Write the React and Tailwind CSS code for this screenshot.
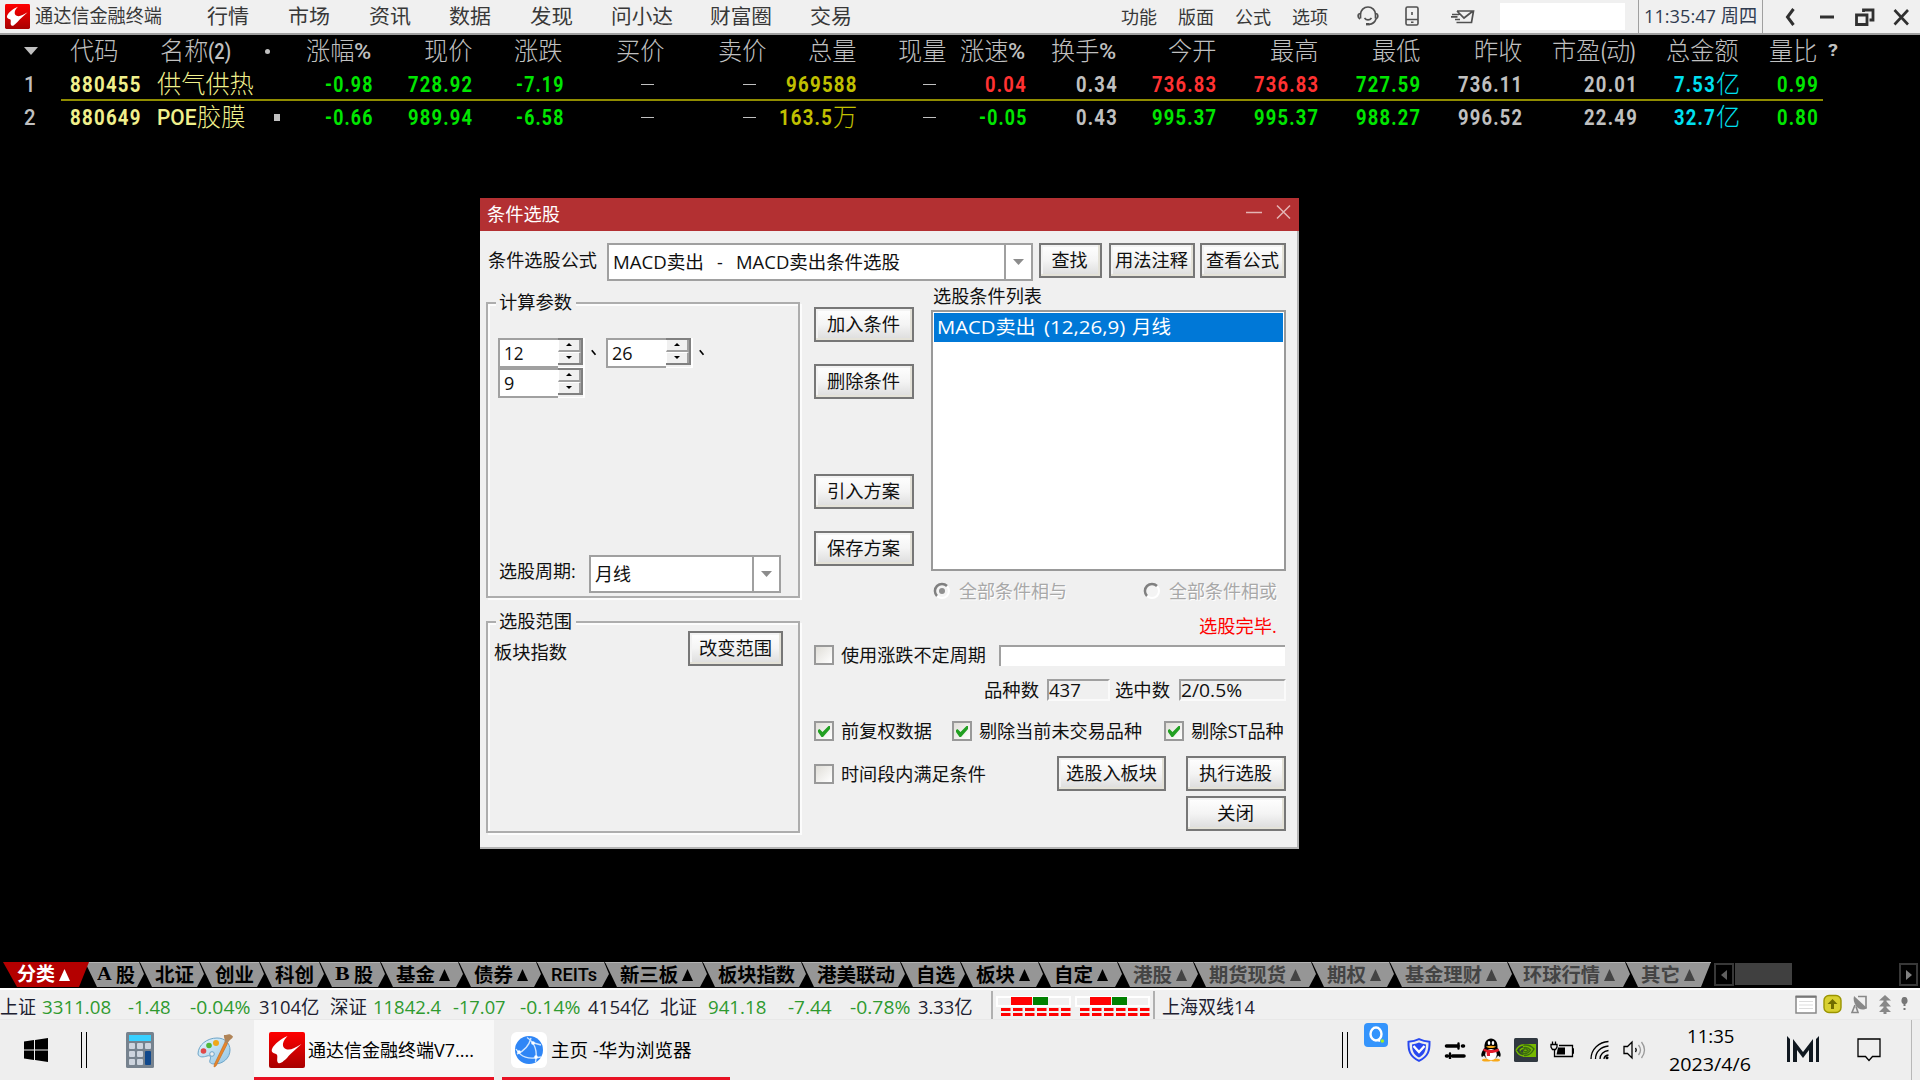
import React, { useLayoutEffect, useRef, useState } from "react";

/* A run of text set to an exact width */
function T({ w, className = "", children }) {
  const ref = useRef(null);
  const [scale, setScale] = useState(1);
  useLayoutEffect(() => {
    const n = ref.current.offsetWidth;
    if (n) setScale(w / n);
  }, [w, children]);
  return (
    <span className={"inline-block shrink-0 whitespace-pre " + className} style={{ width: w }}>
      <span ref={ref} className="inline-block origin-left" style={{ transform: `scaleX(${scale})` }}>
        {children}
      </span>
    </span>
  );
}

const Logo = ({ className }) => (
  <svg viewBox="0 0 36 36" className={className}>
    <defs>
      <linearGradient id="lg" x1="0" y1="0" x2="0" y2="1">
        <stop offset="0" stopColor="#ff0000" />
        <stop offset="1" stopColor="#a80000" />
      </linearGradient>
    </defs>
    <rect width="36" height="36" rx="2" fill="url(#lg)" />
    <path d="M18.500 4C13 6 5 12 3 17c-1 3 1 4 4 5 2.500 1 .5 5 1.500 8 1 2.500 4 1 6-1 3-2 4-4 7-7L32.500 12C27 15.500 23 17.500 19.500 17.500c-4 0-6-2.500-5.500-6 .5-3 2.500-5 4.500-7.500z" fill="#fff" />
  </svg>
);

/* ---------- top bar ---------- */
function TopBar() {
  return (
    <header className="flex h-[35px] w-full items-center overflow-hidden border-b-2 border-[#a0a0a0] bg-[#f0f0f0] text-[20px] leading-none text-[#383838]">
      <Logo className="ml-[5px] h-[25px] w-[25px] shrink-0" />
      <T w={127} className="ml-[5px] text-[19px]">通达信金融终端</T>
      <T w={42} className="ml-[45px]">行情</T>
      <T w={42} className="ml-[39px]">市场</T>
      <T w={42} className="ml-[39px]">资讯</T>
      <T w={42} className="ml-[38px]">数据</T>
      <T w={43} className="ml-[39px]">发现</T>
      <T w={62} className="ml-[38px]">问小达</T>
      <T w={62} className="ml-[37px]">财富圈</T>
      <T w={42} className="ml-[38px]">交易</T>
      <T w={36} className="ml-[269px] text-[18px]">功能</T>
      <T w={36} className="ml-[21px] text-[18px]">版面</T>
      <T w={36} className="ml-[21px] text-[18px]">公式</T>
      <T w={36} className="ml-[21px] text-[18px]">选项</T>
      <svg viewBox="0 0 22 20" className="-mt-[2px] ml-[29px] h-5 w-[22px] shrink-0" fill="none" stroke="#505050" strokeWidth="1.7">
        <path d="M3.500 12.500V8.500A7.500 7.500 0 0 1 18.500 8.500V12.500" />
        <path d="M3 7.500C.5 8 .5 12 3 13M19 7.500c2.500.5 2.500 4.500 0 5.500-1 3-3.500 5-7 5.500M7.500 12c2 2.500 5 2.500 7 0" />
        <path d="M9 18.200h3.500" strokeWidth="2.400" />
      </svg>
      <svg viewBox="0 0 14 20" className="-mt-[2px] ml-[26px] h-5 w-[14px] shrink-0" fill="none" stroke="#505050" strokeWidth="1.600">
        <rect x="1" y="1" width="12" height="18" rx="1.500" />
        <path d="M1 13.500h12M6 16.300h2.500M7 6v3" />
      </svg>
      <svg viewBox="0 0 24 15" className="-mt-[1px] ml-[32px] h-[15px] w-6 shrink-0" fill="none" stroke="#505050" strokeWidth="1.700">
        <path d="M6 2H22.500L20.500 13.500H5.500M6 2l7 7L22 2M1 5.500h7M0 7.800h6.500M4 10.500h5" />
      </svg>
      <div className="ml-[25px] h-[27px] w-[125px] shrink-0 bg-white" />
      <div className="ml-[13px] h-full w-px shrink-0 bg-[#a0a0a0]" />
      <T w={113} className="ml-[5px] text-[19px] text-[#303c50]">11:35:47 周四</T>
      <div className="ml-[5px] h-full w-px shrink-0 bg-[#a0a0a0]" />
      <svg viewBox="0 0 130 20" className="ml-[20px] h-5 w-[130px] shrink-0" fill="none" stroke="#303030" strokeWidth="3">
        <path d="M10.500 2L4.500 10l6 8M37 10h14" />
        <path d="M80.500 5V3H90v10h-3.500M73.500 8H84v9.500H73.500z" strokeWidth="2.800" />
        <path d="M111.500 3l13.500 14.500M125 3l-13.500 14.500" strokeWidth="2.600" />
      </svg>
    </header>
  );
}

/* ---------- quote table ---------- */
const isCjk = (c) => c.charCodeAt(0) > 0x2e80;
function Quote({ text, className = "" }) {
  const parts = text.match(/[\u2e80-\uffff]+|[^\u2e80-\uffff]+/g) || [];
  const unit = (c) => (isCjk(c) ? 24.2 : c === "." ? 5.7 : c === "-" ? 6.5 : c === "%" ? 17 : "()".includes(c) ? 5.6 : /[A-Z]/.test(c) ? 13.3 : 12);
  return (
    <span className={"inline-flex items-center " + className}>
      {parts.map((p, i) => {
        const w = [...p].reduce((a, c) => a + unit(c), 0);
        const cjk = isCjk(p[0]);
        return (
          <T key={i} w={w} className={cjk ? "mb-[2px] text-[25px] font-light" : /[A-Z()%]/.test(p) ? "font-[Roboto] text-[22px] font-medium" : "font-[Roboto] text-[22px] font-bold tracking-[1.5px]"}>
            {p}
          </T>
        );
      })}
    </span>
  );
}

const heads = ["涨幅%", "现价", "涨跌", "买价", "卖价", "总量", "现量", "涨速%", "换手%", "今开", "最高", "最低", "昨收", "市盈(动)", "总金额", "量比"];
const rows = [
  { n: "1", code: "880455", name: "供气供热", v: ["-0.98", "728.92", "-7.19", "–", "–", "969588", "–", "0.04", "0.34", "736.83", "736.83", "727.59", "736.11", "20.01", "7.53亿", "0.99"], c: "gggwwywrwrrgwwcg" },
  { n: "2", code: "880649", name: "POE胶膜", v: ["-0.66", "989.94", "-6.58", "–", "–", "163.5万", "–", "-0.05", "0.43", "995.37", "995.37", "988.27", "996.52", "22.49", "32.7亿", "0.80"], c: "gggwwywgwgggwwcg" },
];
const tone = { g: "text-[#00e600]", r: "text-[#ff3232]", w: "text-[#c0c0c0]", y: "text-[#c0c000]", c: "text-[#00e0f0]" };
const gridCls =
  "grid w-[1920px] items-center leading-none text-[#c0c0c0] grid-cols-[61px_97px_132px_83px_101px_90px_102px_102px_90px_90px_79px_91px_100px_102px_102px_102px_114px_103px_78px_1fr]";

function Table() {
  return (
    <section className="shrink-0 bg-black">
      <div className={gridCls + " h-[33px]"}>
        <svg viewBox="0 0 14 8" className="mb-[2px] ml-[24px] h-2 w-[14px]"><path d="M0 0h14L7 8z" fill="#c0c0c0" /></svg>
        <Quote text="代码" className="ml-[9px]" />
        <div className="flex items-center">
          <Quote text="名称(2)" className="ml-[2px]" />
          <i className="ml-[33px] h-[5px] w-[5px] rounded-full bg-[#c0c0c0]" />
        </div>
        {heads.map((h, i) => (
          <Quote key={i} text={h} className="mr-[2px] justify-self-end" />
        ))}
        <T w={10} className="ml-[9px] mb-[2px] font-[Roboto] text-[16px] font-bold">?</T>
      </div>
      {rows.map((r, ri) => (
        <div key={r.n} className={gridCls + " relative h-[33px]"}>
          <T w={12} className="ml-[24px] font-[Roboto] text-[22px] font-medium">{r.n}</T>
          <Quote text={r.code} className="ml-[9px] text-[#f0f08c]" />
          <div className="flex items-center text-[#f0f08c]">
            <Quote text={r.name} className="-ml-px" />
            {ri === 1 && <i className="ml-[29px] h-[7px] w-[6px] bg-[#c0c0c0]" />}
          </div>
          {r.v.map((v, i) =>
            v === "–" ? (
              <i key={i} className="mr-[12px] h-px w-[13px] justify-self-end bg-[#c0c0c0]" />
            ) : (
              <Quote key={i} text={v} className={(isCjk(v.slice(-1)) ? "mr-[1px] " : "") + "justify-self-end " + tone[r.c[i]]} />
            )
          )}
          {ri === 0 && <div className="absolute bottom-0 left-[61px] h-[2px] w-[1762px] bg-[#908c00]" />}
        </div>
      ))}
    </section>
  );
}

/* ---------- dialog ---------- */
function Btn({ w, tw, children, className = "" }) {
  return (
    <button
      className={"flex h-[35px] shrink-0 items-center justify-center border-2 border-[#777] bg-linear-to-b from-white via-[#f4f4f4] to-[#dcdcdc] pr-[2px] pb-[1px] leading-none shadow-[inset_-2px_-2px_0_#e4e2d8,inset_2px_2px_0_#f3f3f3] " + className}
      style={{ width: w }}
    >
      <T w={tw}>{children}</T>
    </button>
  );
}
function Spin({ v, w }) {
  return (
    <div className="flex h-[30px] w-[87px] shrink-0 border-r-2 border-b border-white bg-[#f0f0f0]">
      <div className="flex h-[30px] w-[60px] items-center border-2 border-r-0 border-[#a0a0a0] bg-white pl-[4px]">
        <T w={w}>{v}</T>
      </div>
      <div className="flex h-[27px] w-[25px] flex-col border-t-2 border-r-2 border-b-2 border-[#808080]">
        <div className="flex h-1/2 items-center justify-center border-r-2 border-b-2 border-[#a0a0a0] border-l border-l-white bg-[#f0f0f0]">
          <svg viewBox="0 0 6 3" className="h-[3px] w-[6px]"><path d="M3 0l3 3H0z" /></svg>
        </div>
        <div className="flex h-1/2 items-center justify-center border-t border-r-2 border-l border-white border-r-[#a0a0a0] bg-[#f0f0f0]">
          <svg viewBox="0 0 6 3" className="h-[3px] w-[6px]"><path d="M0 0h6L3 3z" /></svg>
        </div>
      </div>
    </div>
  );
}
const Tick = () => (
  <svg viewBox="0 0 8 8" className="h-[7px] w-[6px]"><path d="M1 1l5 6" stroke="#000" fill="none" strokeWidth="2.200" /></svg>
);
function Combo({ w, children, className = "" }) {
  return (
    <div className={"flex h-[38px] shrink-0 items-center border-2 border-[#a0a0a0] bg-white pl-[4px] " + className} style={{ width: w }}>
      {children}
      <div className="ml-auto flex h-full w-[27px] items-center justify-center border-l-2 border-[#a0a0a0]">
        <svg viewBox="0 0 11 6" className="h-[6px] w-[11px]"><path d="M0 0h11L5.500 6z" fill="#8c8c8c" /></svg>
      </div>
    </div>
  );
}
function Check({ on, w, children, className = "" }) {
  return (
    <label className={"flex shrink-0 items-center " + className}>
      <span className="flex h-5 w-5 items-center justify-center border-2 border-[#999] bg-linear-to-br from-[#e0ded8] to-white">
        {on && (
          <svg viewBox="0 0 12 11" className="h-[11px] w-3"><path d="M0 4l1.500-1 3 3L10.500 0H12v3L5 11H3.500L0 6z" fill="#22a022" /></svg>
        )}
      </span>
      <T w={w} className="mr-px ml-[7px]">{children}</T>
    </label>
  );
}
function Group({ title, className, children }) {
  return (
    <fieldset className={"relative w-[314px] shrink-0 border-2 border-[#adadad] shadow-[2px_2px_0_#fcfcfc,inset_2px_2px_0_#fcfcfc] " + className}>
      <div className="absolute -top-[11px] left-[8px] bg-[#f0f0f0] pr-[4px] pl-[3px] leading-none">
        <T w={73}>{title}</T>
      </div>
      {children}
    </fieldset>
  );
}
function Radio({ on, className, children }) {
  return (
    <label className={"flex items-center text-[#a8a8a8] [text-shadow:1px_1px_0_#fff] " + className}>
      <svg viewBox="0 0 18 18" className="h-[18px] w-[18px]" fill="none">
        <circle cx="9" cy="9" r="7" fill="#f4f4f4" stroke="#fff" strokeWidth="2" />
        <path d="M4 14A7 7 0 0 1 14 4" stroke="#808080" strokeWidth="2.500" />
        {on && <circle cx="9" cy="9" r="3" fill="#909090" />}
      </svg>
      <T w={108} className="ml-[8px]">{children}</T>
    </label>
  );
}

function Dialog() {
  return (
    <div className="absolute top-[198px] left-[480px] h-[651px] w-[819px] border-r-2 border-b-2 border-[#b4b4b4] bg-[#f0f0f0] text-[18px] leading-none text-[#101010]">
      <div className="flex h-[33px] w-[819px] items-center bg-[#b33032] text-white">
        <T w={73} className="-mt-[2px] ml-[7px]">条件选股</T>
        <svg viewBox="0 0 46 16" className="mt-[-5px] mr-[7px] ml-auto h-4 w-[46px]" fill="none" stroke="#e4b4b4" strokeWidth="1.500">
          <path d="M0 8.500h16M31 1.500l13 13M44 1.500l-13 13" />
        </svg>
      </div>
      <div className="flex h-[62px] items-start pt-[12px] pl-[8px]">
        <T w={109} className="mt-[8px]">条件选股公式</T>
        <Combo w={426} className="ml-[10px]">
          <T w={91}>MACD卖出</T>
          <T w={6} className="ml-[13px]">-</T>
          <T w={164} className="ml-[13px]">MACD卖出条件选股</T>
        </Combo>
        <Btn w={63} tw={36} className="ml-[6px]">查找</Btn>
        <Btn w={86} tw={73} className="ml-[7px]">用法注释</Btn>
        <Btn w={86} tw={73} className="ml-[5px]">查看公式</Btn>
      </div>
      <div className="flex">
        <div className="w-[334px] pl-[6px]">
          <Group title="计算参数" className="mt-[9px] h-[296px]">
            <div className="flex w-[260px] flex-wrap pt-[34px] pl-[10px]">
              <Spin v="12" w={20} />
              <span className="mt-[11px] mr-[9px] ml-[6px] w-[6px]"><Tick /></span>
              <Spin v="26" w={21} />
              <span className="mt-[11px] ml-[6px] w-[6px]"><Tick /></span>
              <Spin v="9" w={10} />
            </div>
            <div className="mt-[157px] flex h-[38px] items-center pl-[11px]">
              <T w={77} className="-mt-[7px]">选股周期:</T>
              <Combo w={192} className="ml-[13px]"><T w={36}>月线</T></Combo>
            </div>
          </Group>
          <Group title="选股范围" className="mt-[23px] h-[212px]">
            <div className="flex items-start justify-between pt-[8px] pr-[15px] pl-[6px]">
              <T w={73} className="mt-[12px]">板块指数</T>
              <Btn w={95} tw={73}>改变范围</Btn>
            </div>
          </Group>
        </div>
        <div className="w-[472px]">
          <div className="flex h-[340px]">
            <div className="w-[100px] pt-[14px]">
              <Btn w={100} tw={73}>加入条件</Btn>
              <Btn w={100} tw={73} className="mt-[22px]">删除条件</Btn>
              <Btn w={100} tw={73} className="mt-[75px]">引入方案</Btn>
              <Btn w={100} tw={73} className="mt-[22px]">保存方案</Btn>
            </div>
            <div className="-mt-[6px] ml-[17px] w-[355px]">
              <T w={109} className="mt-[-5px] ml-[2px]">选股条件列表</T>
              <div className="mt-[5px] h-[261px] border-2 border-[#999] bg-white p-[1px]">
                <div className="flex h-[29px] items-center bg-[#0078d7] pl-[3px] text-[19px] text-white">
                  <T w={99}>MACD卖出</T>
                  <T w={81} className="ml-[8px]">(12,26,9)</T>
                  <T w={39} className="ml-[7px]">月线</T>
                </div>
              </div>
              <div className="mt-[11px] flex">
                <Radio on className="ml-[2px]">全部条件相与</Radio>
                <Radio className="ml-[76px]">全部条件相或</Radio>
              </div>
            </div>
          </div>
          <div className="-mt-[16px] flex h-[18px] justify-end pr-[9px]"><T w={78} className="text-[#ff0000]">选股完毕.</T></div>
          <div className="mt-[9px] flex h-[22px] items-center">
            <Check w={145}>使用涨跌不定周期</Check>
            <div className="ml-[12px] h-[21px] w-[286px] border-t-2 border-l-2 border-[#a0a0a0] bg-white" />
          </div>
          <div className="mt-[13px] flex h-[22px] items-center justify-end">
            <T w={55}>品种数</T>
            <div className="ml-[8px] h-[22px] w-[63px] border-2 border-[#fafafa] border-t-[#a0a0a0] border-l-[#a0a0a0] leading-[18px]"><T w={32}>437</T></div>
            <T w={55} className="ml-[5px]">选中数</T>
            <div className="ml-[9px] h-[22px] w-[107px] border-2 border-[#fafafa] border-t-[#a0a0a0] border-l-[#a0a0a0] leading-[18px]"><T w={61}>2/0.5%</T></div>
          </div>
          <div className="mt-[19px] flex h-[22px] items-center">
            <Check on w={91}>前复权数据</Check>
            <Check on w={163} className="ml-[19px]">剔除当前未交易品种</Check>
            <Check on w={93} className="ml-[21px]">剔除ST品种</Check>
          </div>
          <div className="mt-[14px] flex h-[35px] items-center">
            <Check w={145}>时间段内满足条件</Check>
            <Btn w={109} tw={91} className="ml-[70px]">选股入板块</Btn>
            <Btn w={100} tw={73} className="ml-[20px]">执行选股</Btn>
          </div>
          <div className="mt-[5px] flex justify-end"><Btn w={100} tw={37}>关闭</Btn></div>
        </div>
      </div>
    </div>
  );
}

/* ---------- category tabs ---------- */
const tabs = [
  ["A 股", 55, 38], ["北证", 60, 39], ["创业", 60, 39], ["科创", 60, 39], ["B 股", 61, 37],
  ["基金", 78, 39, 1], ["债券", 78, 39, 1], ["REITs", 68, 46], ["新三板", 98, 58, 1], ["板块指数", 99, 77],
  ["港美联动", 99, 78], ["自选", 60, 39], ["板块", 78, 39, 1], ["自定", 79, 39, 1], ["港股", 76, 39, 1, 1],
  ["期货现货", 118, 77, 1, 1], ["期权", 78, 39, 1, 1], ["基金理财", 118, 77, 1, 1], ["环球行情", 118, 77, 1, 1], ["其它", 80, 39, 1, 1],
];
const Up = ({ className = "" }) => (
  <svg viewBox="0 0 11 12" className={"ml-[4px] h-3 w-[11px] shrink-0 " + className}><path d="M5.500 0L11 12H0z" fill="currentColor" /></svg>
);
function Tabs() {
  return (
    <nav className="flex h-[26px] items-start bg-black text-[19px] leading-none font-bold">
      <div className="relative z-10 ml-[3px] flex h-[25px] w-[86px] shrink-0 items-center bg-[#b40000] pl-[14px] text-white [clip-path:polygon(0_0,100%_0,76px_100%,14px_100%)]">
        <T w={38}>分类</T><Up />
      </div>
      <div className="-ml-[5px] flex">
        {tabs.map(([t, w, tw, up, dim], i) => (
          <div key={t} className="relative h-[25px] shrink-0" style={{ width: w }}>
            <div
              className="flex h-[25px] w-[calc(100%+6px)] items-center border-t border-[#b4b4b4] bg-[#969696]"
              style={{ clipPath: i === tabs.length - 1 ? "polygon(1px 0,100% 0,calc(100% - 10px) 100%,13px 100%)" : "polygon(1px 0,calc(100% - 6px) 0,calc(100% - 1px) 48%,calc(100% - 8px) 100%,13px 100%)" }}
            >
              <span className={"flex items-center " + (i === 0 ? "ml-[13px] " : "ml-[16px] ") + (dim ? "text-[#444]" : "text-black")}>
                {/^[AB]/.test(t) ? (
                  <><T w={15} className="-mt-[3px] font-['Liberation_Serif']">{t[0]}</T><T w={19} className="ml-[4px]">股</T></>
                ) : (
                  <T w={tw} className={t === "REITs" ? "-mt-[2px] -ml-px font-[Roboto] font-medium" : ""}>{t}</T>
                )}
                {up && <Up />}
              </span>
            </div>
          </div>
        ))}
      </div>
      <div className="mt-[1px] ml-[9px] flex h-[23px] w-[20px] shrink-0 items-center justify-center border-2 border-[#383838]">
        <svg viewBox="0 0 6 10" className="h-[10px] w-[6px]"><path d="M6 0v10L0 5z" fill="#606060" /></svg>
      </div>
      <div className="mt-[1px] ml-[1px] h-[22px] w-[57px] shrink-0 bg-[#404040]" />
      <div className="mt-[1px] mr-[2px] ml-auto flex h-[23px] w-[19px] shrink-0 items-center justify-center border-2 border-[#383838]">
        <svg viewBox="0 0 6 10" className="h-[10px] w-[6px]"><path d="M0 0v10l6-5z" fill="#808080" /></svg>
      </div>
    </nav>
  );
}

/* ---------- status bar ---------- */
const stats = [
  ["上证", 36, 0], ["3311.08", 69, 6, 1], ["-1.48", 43, 17, 1], ["-0.04%", 60, 19, 1], ["3104亿", 60, 9],
  ["深证", 37, 11], ["11842.4", 68, 6, 1], ["-17.07", 53, 12, 1], ["-0.14%", 60, 14, 1], ["4154亿", 61, 8],
  ["北证", 37, 11], ["941.18", 58, 11, 1], ["-7.44", 44, 22, 1], ["-0.78%", 60, 18, 1], ["3.33亿", 55, 8],
];
const dashes = [0, 1, 2, 3, 4, 5];
const Meter = ({ className }) => (
  <svg viewBox="0 0 76 22" className={"h-[22px] w-[76px] shrink-0 " + className}>
    <rect x="1" y="2" width="73" height="9" fill="#f0f0f0" stroke="#fff" strokeWidth="2" />
    <rect x="15" y="2" width="21" height="8" fill="#f00" />
    <rect x="37" y="2" width="15" height="8" fill="#008000" />
    {dashes.map((d) => (
      <g key={d} fill="#f00">
        <rect x={5 + d * 12} y="13" width="9.500" height="3" />
        <rect x={5 + d * 12} y="18" width="9.500" height="3" />
      </g>
    ))}
  </svg>
);
function Status() {
  return (
    <div className="flex h-[31px] items-center border-t-2 border-[#fff] bg-[#f0f0f0] text-[19px] leading-none text-[#202030]">
      {stats.map(([t, w, g, green], i) => (
        <span key={i} className={"flex pt-[5px] " + (green ? "text-[#2f9a2f]" : "")} style={{ marginLeft: g }}><T w={w}>{t}</T></span>
      ))}
      <div className="ml-[18px] h-[28px] w-[2px] bg-[#b0b0b0]" />
      <Meter className="mt-[2px] ml-[3px]" />
      <Meter className="mt-[2px] ml-[3px]" />
      <div className="ml-[2px] h-[28px] w-[2px] bg-[#b0b0b0]" />
      <T w={93} className="mt-[5px] ml-[7px]">上海双线14</T>
      <svg viewBox="0 0 116 20" className="mr-[10px] mb-[1px] ml-auto h-5 w-[116px]">
        <rect x="2" y="3" width="20" height="16" fill="#fff" stroke="#888" strokeWidth="1.500" />
        <path d="M5 7.500h14M5 11h14M5 14.500h14" stroke="#ddd" strokeWidth="1.200" />
        <path d="M1.500 2.500h21" stroke="#777" strokeWidth="2" />
        <rect x="30" y="1.500" width="17" height="17" rx="5" fill="#d8d030" stroke="#9a9400" strokeWidth="1.400" />
        <path d="M38.500 5l5 5h-3.500v5h-3v-5h-3.500z" fill="#706c00" />
        <path d="M60 2l13 12c-4 3-9 1-11-2s-3-7-2-10z" fill="#888" />
        <path d="M64 2.500h8v12M61 11l-3 7.500h6l-2-6" fill="none" stroke="#888" strokeWidth="1.600" />
        <path d="M91 1l6 5.500h-4.500v1L97 12.500h-4.500v1L97 18h-4.500v2h-3v-2H85l4.500-4.500v-1H85l4.500-5v-1H85z" fill="#888" />
        <path d="M110.500 3a2.500 3.500 0 0 1 1 7v2h-2v-2a2.500 3.500 0 0 1 1-7zM109.500 14h2v2h-2z" fill="#777" />
      </svg>
    </div>
  );
}

/* ---------- taskbar ---------- */
const Bars = ({ className }) => <div className={"h-9 w-[6px] shrink-0 border-x border-black " + className} />;
function Taskbar() {
  return (
    <footer className="flex h-[61px] items-center border-t border-[#e8e8e8] bg-[#eeeeee] text-[18px] leading-none text-black">
      <svg viewBox="0 0 24 24" className="ml-[24px] h-6 w-6 shrink-0"><path d="M0 3.400L10 2v9.500H0zM11 1.900L24 0v11.500H11zM0 12.500h10V22L0 20.600zM11 12.500h13V24l-13-1.900z" /></svg>
      <Bars className="ml-[33px]" />
      <svg viewBox="0 0 28 36" className="ml-[39px] h-9 w-7 shrink-0">
        <rect width="28" height="36" rx="1.500" fill="#76828e" />
        <rect x="3" y="3" width="22" height="6" fill="#38d0ff" />
        <g fill="#cdd4de">
          <rect x="3" y="11" width="6" height="6" rx="1" /><rect x="11" y="11" width="6" height="6" rx="1" /><rect x="19" y="11" width="6" height="6" rx="1" />
          <rect x="3" y="19" width="6" height="6" rx="1" /><rect x="11" y="19" width="6" height="6" rx="1" />
          <rect x="3" y="27" width="6" height="6" rx="1" /><rect x="11" y="27" width="6" height="6" rx="1" />
        </g>
        <rect x="19" y="19" width="6" height="14" rx="1" fill="#10488c" />
      </svg>
      <svg viewBox="0 0 36 36" className="ml-[43px] h-9 w-9 shrink-0">
        <defs><linearGradient id="pal" x1="0" y1="0" x2="1" y2="1"><stop offset="0" stopColor="#e8f6fc" /><stop offset="1" stopColor="#90c4e4" /></linearGradient></defs>
        <path d="M1 22C1 13 10 6 20 6c8 0 13 5 13 12 0 8-7 14-15 14-4 0-6-1-5-4s1-5-3-4c-3 1-8 2-9-2z" fill="url(#pal)" stroke="#6ca4c8" />
        <circle cx="15" cy="22" r="2.300" fill="#eee" stroke="#6ca4c8" />
        <circle cx="6.500" cy="19" r="2.800" fill="#e04848" /><circle cx="12" cy="13.500" r="2.800" fill="#50b838" /><circle cx="19" cy="11" r="3" fill="#f0a818" />
        <path d="M28 10l2.500 1.500L19 34l-2 1 .3-2.500z" fill="#e8862c" stroke="#c06818" strokeWidth=".6" />
        <path d="M27 3c3 .5 5-3 9 1.500-1 3-3 2-5.500 7l-3-1.500c1-3-1-4-.5-7z" fill="#b08458" />
      </svg>
      <div className="ml-[21px] flex h-[60px] w-[240px] shrink-0 items-center border-b-3 border-[#e81123] bg-[#f8f8f8] pt-[3px] pl-[15px]">
        <Logo className="h-9 w-9 shrink-0" />
        <T w={166} className="ml-[3px]">通达信金融终端V7....</T>
      </div>
      <div className="ml-[8px] flex h-[60px] w-[228px] shrink-0 items-center border-b-3 border-[#e81123] pt-[3px] pl-[9px]">
        <svg viewBox="0 0 36 36" className="h-9 w-9 shrink-0">
          <rect width="36" height="36" rx="6" fill="#fff" />
          <circle cx="18" cy="18" r="14" fill="#2f86f6" />
          <g fill="none" stroke="#cfe6ff" strokeWidth="1.400"><path d="M16 5.500C23 10 27 17 24.500 30M6 22c7-3 12-8 14-16M5 17c5 8 12 11 25 8M23 11l7 2" /></g>
          <circle cx="22" cy="11" r="1.800" fill="#fff" /><circle cx="8" cy="20" r="1.800" fill="#fff" /><circle cx="25" cy="25" r="1.800" fill="#fff" />
        </svg>
        <T w={140} className="ml-[4px]">主页 -华为浏览器</T>
      </div>
      <Bars className="ml-[612px]" />
      <svg viewBox="0 0 24 24" className="-mt-[30px] ml-[16px] h-6 w-6 shrink-0">
        <rect width="24" height="24" rx="4" fill="#3494fc" />
        <ellipse cx="12" cy="11" rx="5.500" ry="6.500" fill="none" stroke="#fff" strokeWidth="2.400" />
        <path d="M13 17l3 1" stroke="#fff" strokeWidth="2" /><circle cx="18.300" cy="18" r="1.800" fill="#a4f020" />
      </svg>
      <svg viewBox="0 0 24 24" className="ml-[19px] h-6 w-6 shrink-0" fill="none" stroke="#2848f0" strokeWidth="2">
        <path d="M12 1.200C8 3 5 3.500 1.500 3.800 1.200 13 3 18.500 12 22.800 21 18.500 22.800 13 22.500 3.800 19 3.500 16 3 12 1.200z" />
        <path d="M12 4.500c-3 1-4 1.500-7 2C5 13 7 17 12 19.500 17 17 19 13 19 6.500c-3-.5-4-1-7-2z" fill="#2848f0" stroke="none" />
        <path d="M6.500 8l5.500 6 5.500-6" stroke="#fff" strokeWidth="2.400" />
      </svg>
      <svg viewBox="0 0 22 18" className="ml-[13px] h-[18px] w-[22px] shrink-0" stroke="#000" strokeWidth="3.600" strokeLinecap="round">
        <path d="M2.500 5h11.500M18.500 5h1M2.500 15h1M8.500 15h11.500" /><path d="M14.500 2.500v5M6 12.500v5" strokeWidth="2.400" />
      </svg>
      <svg viewBox="0 0 22 24" className="ml-[14px] h-6 w-[22px] shrink-0">
        <ellipse cx="6.500" cy="22" rx="4.500" ry="1.600" fill="#f8a818" /><ellipse cx="15.500" cy="22" rx="4.500" ry="1.600" fill="#f8a818" />
        <path d="M4.500 10C4 4 7 .5 11 .5S18 4 17.500 10c3 4 4 7 2.500 9l-2-1.500c-2 5-12 5-14 0L2 19C.5 17 1.500 14 4.500 10z" fill="#000" />
        <ellipse cx="11" cy="16.500" rx="5.800" ry="5.500" fill="#fff" />
        <ellipse cx="9" cy="5" rx="1.300" ry="2" fill="#fff" /><ellipse cx="13" cy="5" rx="1.300" ry="2" fill="#fff" />
        <path d="M6 8.500c3-1 7-1 10 0-2 2-8 2-10 0z" fill="#f8a818" />
        <path d="M3.500 10.500c5 2 10 2 15 0l.5 2.500c-3 1.500-6 2-9 2v3H7l-.5-4-3-1z" fill="#e41c2c" />
      </svg>
      <svg viewBox="0 0 24 24" className="ml-[12px] h-6 w-6 shrink-0">
        <rect width="24" height="24" rx="1.500" fill="#303840" /><path d="M9 6h13v13H9z" fill="#76b900" />
        <path d="M2 12.500C6 6 15 5 20 11c-4 8-13 9-18 1.500zM5.500 12.500c3-4 8-4 11-.5-3 5-8 5-11 .5zM9 12c2-2 4-1 5 .5-2 2-4 1.500-5-.5z" fill="none" stroke="#3c6c10" strokeWidth="1.400" />
        <path d="M2 12.500C4 8 7 7 9.500 7M2.500 13C4 16 7 18 10 18M6 12.500c1-1.500 2-2 3.500-2.200" fill="none" stroke="#76b900" strokeWidth="1.400" />
      </svg>
      <svg viewBox="0 0 24 18" className="ml-[12px] h-[18px] w-6 shrink-0" fill="none" stroke="#000">
        <path d="M9 4.500h13.500v11H4.500V9M22.500 8h1v4h-1" strokeWidth="1.300" /><path d="M8 6.500h7v7H6.500z" fill="#000" stroke="none" />
        <path d="M1 3.500h6V6L5.500 8.500h-3L1 6zM2.500 3.500V.5M5.500 3.500V.5" strokeWidth="1.300" fill="#eee" />
      </svg>
      <svg viewBox="0 0 20 20" className="ml-[16px] h-5 w-5 shrink-0" fill="none" stroke="#000" strokeWidth="1.300">
        <path d="M1 19C1 9 9 2 18.500 1.500" /><path d="M5.500 19C5.500 12 11 6.500 18.500 6" /><path d="M10 19c0-4.500 3.500-8 8.500-8.500" /><path d="M14 19c0-2 1.500-3.500 4.500-4" /><circle cx="17" cy="17.700" r="1.500" fill="#000" stroke="none" />
      </svg>
      <svg viewBox="0 0 24 20" className="ml-[13px] h-5 w-6 shrink-0" fill="none" stroke="#000" strokeWidth="1.300">
        <path d="M1 6.500h3.500L9 2v16l-4.500-4.500H1z" /><path d="M12.500 8q1.500 2 0 4" /><path d="M15.500 5q4 5 0 10M18.500 2q6 8 0 16" stroke="#999" />
      </svg>
      <div className="ml-[21px] flex w-[84px] shrink-0 flex-col items-center gap-[9px] text-[19px]">
        <T w={47}>11:35</T>
        <T w={82}>2023/4/6</T>
      </div>
      <svg viewBox="0 0 32 26" className="-mt-[3px] ml-[35px] h-[26px] w-8 shrink-0">
        <path d="M0 0l3 3v23H0zM32 0l-3 3v23h3zM6 26V3l10 13L26 3v23h-4V14l-6 8-6-8v12z" fill="#101820" />
      </svg>
      <svg viewBox="0 0 24 24" className="ml-[38px] h-6 w-6 shrink-0" fill="none" stroke="#000" strokeWidth="1.300"><path d="M1 1h22v17.500h-7.500L12 22.500l-3.500-4H1z" /></svg>
      <div className="ml-[30px] h-full w-px bg-[#b8b8b8]" />
    </footer>
  );
}

export default function App() {
  return (
    <div className="relative flex h-[1080px] w-[1920px] flex-col overflow-hidden bg-black font-['Open_Sans','Noto_Sans_CJK_SC',sans-serif]">
      <TopBar />
      <Table />
      <div className="flex-1 bg-black" />
      <Tabs />
      <Status />
      <Taskbar />
      <Dialog />
    </div>
  );
}
